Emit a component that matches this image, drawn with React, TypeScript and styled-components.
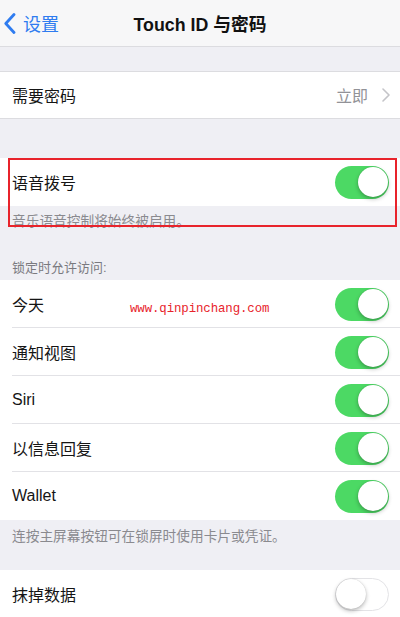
import React from "react";
import styled, { createGlobalStyle } from "styled-components";

const Global = createGlobalStyle`
  html, body { margin: 0; padding: 0; background: #efeff4; }
  body { font-family: "Liberation Sans", "Noto Sans CJK SC", sans-serif; -webkit-font-smoothing: antialiased; }
  #root { width: 400px; height: 617px; overflow: hidden; }
`;

const Page = styled.div`
  position: relative;
  width: 400px;
  height: 617px;
  background: #efeff4;
  overflow: hidden;
`;

const NavBar = styled.div`
  height: 46px;
  background: #f7f7f8;
  border-bottom: 1px solid #dcdce0;
  display: flex;
  align-items: center;
  position: relative;
`;

const Back = styled.div`
  display: flex;
  align-items: center;
  gap: 7px;
  padding-left: 4px;
  color: #2f7cf0;
  font-size: 18px;
  z-index: 1;
`;

const Title = styled.div`
  position: absolute;
  left: 0;
  right: 0;
  text-align: center;
  font-size: 17.8px;
  font-weight: 700;
  color: #111;
`;

const Gap = styled.div<{ $h: number }>`
  height: ${(p) => p.$h}px;
`;

const Group = styled.div<{ $top?: boolean; $bottom?: boolean }>`
  background: #fff;
  border-top: ${(p) => (p.$top ? "1px solid #dcdce0" : "none")};
  border-bottom: ${(p) => (p.$bottom ? "1px solid #dcdce0" : "none")};
`;

const Row = styled.div<{ $h: number; $sep?: boolean }>`
  height: ${(p) => p.$h}px;
  display: flex;
  align-items: center;
  padding: 0 10px 0 12px;
  position: relative;
  box-sizing: border-box;
  ${(p) =>
    p.$sep
      ? `&::after { content: ""; position: absolute; left: 12px; right: 0; bottom: 0; height: 1px; background: #e2e2e6; }`
      : ""}
`;

const Label = styled.div`
  flex: 1;
  font-size: 16px;
  color: #151515;
`;

const Detail = styled.div`
  display: flex;
  align-items: center;
  gap: 14px;
  color: #929297;
  font-size: 16px;
`;

const Track = styled.div<{ $on: boolean }>`
  width: 54px;
  height: 33px;
  border-radius: 17px;
  box-sizing: border-box;
  position: relative;
  background: ${(p) => (p.$on ? "#4cd964" : "#fff")};
  border: ${(p) => (p.$on ? "none" : "1.5px solid #e3e3e6")};
  margin-right: 1px;
`;

const Knob = styled.div<{ $on: boolean }>`
  position: absolute;
  top: ${(p) => (p.$on ? "1.5px" : "0px")};
  ${(p) => (p.$on ? "right: 1.5px;" : "left: 0px;")}
  width: 30px;
  height: 30px;
  border-radius: 50%;
  background: #fff;
  box-shadow: 0 2px 4px rgba(0, 0, 0, 0.28), 0 0 1px rgba(0, 0, 0, 0.2);
`;

const Footer = styled.div<{ $h: number; $pt: number }>`
  height: ${(p) => p.$h}px;
  padding: ${(p) => p.$pt}px 12px 0;
  box-sizing: border-box;
  font-size: 13.7px;
  line-height: 16px;
  color: #8a8a8f;
`;

const SectionHeader = styled.div`
  padding: 0 12px;
  font-size: 13px;
  color: #7a7a7f;
  height: 28px;
  display: flex;
  align-items: center;
`;

const Highlight = styled.div`
  position: relative;
`;

const RedBox = styled.div`
  position: absolute;
  left: 8px;
  top: 0px;
  width: 389px;
  height: 69px;
  border: 2px solid #e8232b;
  box-sizing: border-box;
  pointer-events: none;
`;

const Watermark = styled.div`
  position: absolute;
  left: 130px;
  top: 302px;
  font-family: "Liberation Mono", "DejaVu Sans Mono", monospace;
  font-size: 12.4px;
  color: #e8232b;
  letter-spacing: -0.1px;
`;

const Toggle = ({ on }: { on: boolean }) => (
  <Track $on={on}>
    <Knob $on={on} />
  </Track>
);

const Chevron = () => (
  <svg width="8" height="14" viewBox="0 0 8 14">
    <path d="M1 1l6 6-6 6" fill="none" stroke="#c4c4c8" strokeWidth="1.6" strokeLinecap="round" strokeLinejoin="round" />
  </svg>
);

const BackChevron = () => (
  <svg width="12" height="21" viewBox="0 0 12 21">
    <path d="M10 1.5L1.8 10.5 10 19.5" fill="none" stroke="#2f7cf0" strokeWidth="2.8" strokeLinecap="round" strokeLinejoin="round" />
  </svg>
);

const lockItems = ["今天", "通知视图", "Siri", "以信息回复", "Wallet"];

export default function App() {
  return (
    <Page>
      <Global />
      <NavBar>
        <Back>
          <BackChevron />
          <span>设置</span>
        </Back>
        <Title>Touch ID 与密码</Title>
      </NavBar>
      <Gap $h={24} />
      <Group $top $bottom>
        <Row $h={46}>
          <Label>需要密码</Label>
          <Detail>
            <span>立即</span>
            <Chevron />
          </Detail>
        </Row>
      </Group>
      <Gap $h={39} />
      <Highlight>
        <Group>
          <Row $h={48}>
            <Label>语音拨号</Label>
            <Toggle on />
          </Row>
        </Group>
        <Footer $h={46} $pt={8}>音乐语音控制将始终被启用。</Footer>
        <RedBox />
      </Highlight>
      <SectionHeader>锁定时允许访问:</SectionHeader>
      <Group>
        {lockItems.map((t, i) => (
          <Row key={t} $h={48} $sep={i < lockItems.length - 1}>
            <Label>{t}</Label>
            <Toggle on />
          </Row>
        ))}
      </Group>
      <Footer $h={50} $pt={9}>连按主屏幕按钮可在锁屏时使用卡片或凭证。</Footer>
      <Group>
        <Row $h={48}>
          <Label>抹掉数据</Label>
          <Toggle on={false} />
        </Row>
      </Group>
      <Watermark>www.qinpinchang.com</Watermark>
    </Page>
  );
}
